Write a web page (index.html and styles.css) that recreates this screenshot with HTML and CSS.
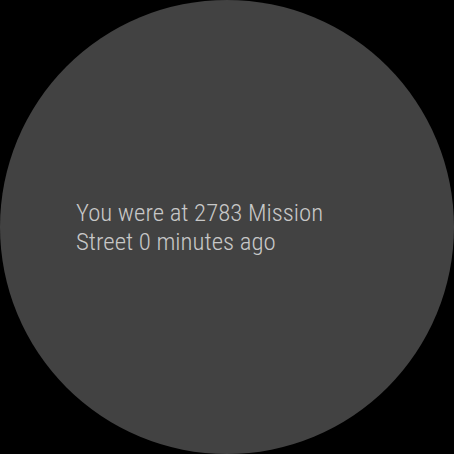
FILE: index.html
```
<!DOCTYPE html>
<html>
<head>
<meta charset="utf-8">
<link rel="stylesheet" href="styles.css">
</head>
<body>
<div class="watch">
  <p class="message">You were at 2783 Mission Street 0 minutes ago</p>
</div>
</body>
</html>
```
FILE: styles.css
```
html, body {
  margin: 0;
  padding: 0;
  background: #000;
}
.watch {
  width: 454px;
  height: 454px;
  border-radius: 50%;
  background: #424242;
  display: flex;
  align-items: center;
  box-sizing: border-box;
  padding: 0 77px 0 76px;
}
.message {
  margin: 0;
  font-family: "Roboto Condensed", Roboto, sans-serif;
  font-stretch: condensed;
  font-weight: 300;
  font-size: 24.8px;
  line-height: 29px;
  color: #c8c8c8;
}
```
